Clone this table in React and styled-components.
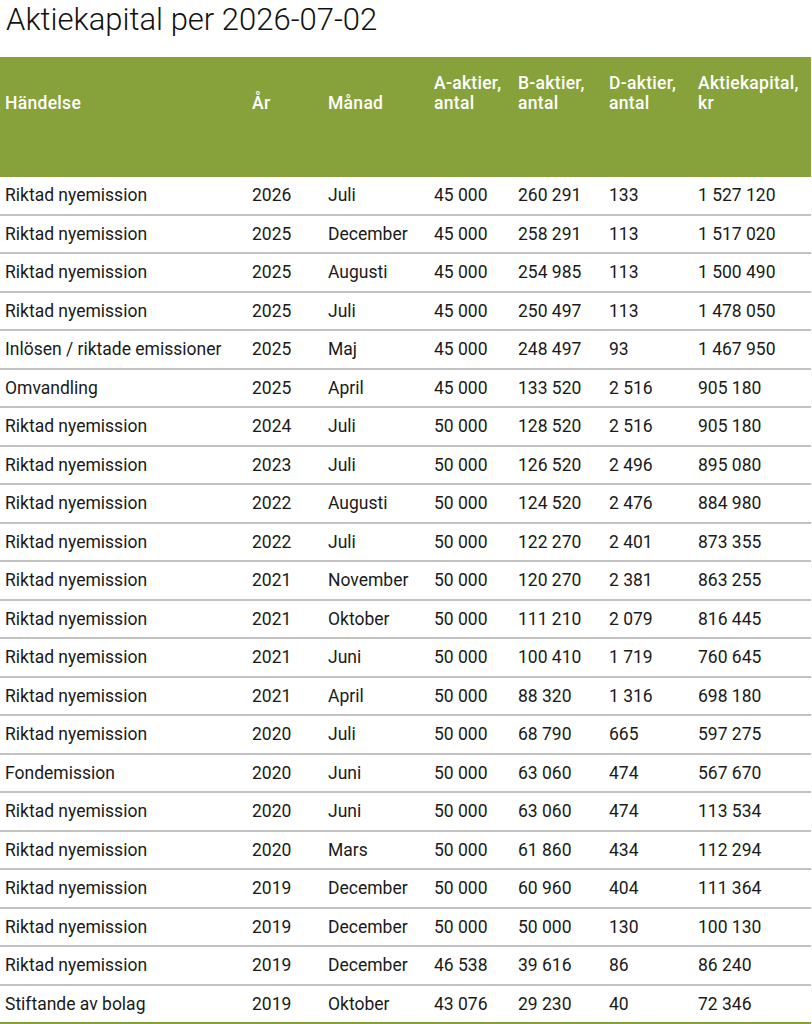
import React from "react";
import styled, { createGlobalStyle } from "styled-components";

const GlobalStyle = createGlobalStyle`
    body {
        margin: 0;
        background: #ffffff;
        font-family: Roboto, "Liberation Sans", sans-serif;
        color: #1a1a1a;
    }
`;

const Page = styled.div`
    width: 811px;
`;

const Title = styled.h1`
    margin: 0;
    padding: 0 0 0 6px;
    height: 57px;
    font-size: 31px;
    font-weight: 300;
    line-height: 40px;
    color: #111;
`;

const Table = styled.table`
    width: 811px;
    border-collapse: separate;
    border-spacing: 0;
    table-layout: fixed;
    font-size: 17.5px;
    border-bottom: 2px solid #86a13a;
`;

const Th = styled.th`
    background-color: #87a23a;
    color: #ffffff;
    font-weight: 500;
    font-size: 17.5px;
    letter-spacing: 0.3px;
    text-align: start;
    vertical-align: bottom;
    line-height: 20px;
    padding: 16px 5px 64px;
    width: ${(props) => props.width}px;
    white-space: nowrap;
`;

const Td = styled.td`
    height: 36.5px;
    padding: 0 5px;
    line-height: 20px;
    vertical-align: middle;
    white-space: nowrap;
    border-bottom: ${(props) => (props.last ? "none" : "2px solid #c2c2c2")};
`;

const columns = [
    { label: "Händelse", width: 237 },
    { label: "År", width: 66 },
    { label: "Månad", width: 96 },
    { label: ["A-aktier,", "antal"], width: 74 },
    { label: ["B-aktier,", "antal"], width: 81 },
    { label: ["D-aktier,", "antal"], width: 79 },
    { label: ["Aktiekapital,", "kr"], width: 108 },
];

const rows = [
    ["Riktad nyemission", "2026", "Juli", "45 000", "260 291", "133", "1 527 120"],
    ["Riktad nyemission", "2025", "December", "45 000", "258 291", "113", "1 517 020"],
    ["Riktad nyemission", "2025", "Augusti", "45 000", "254 985", "113", "1 500 490"],
    ["Riktad nyemission", "2025", "Juli", "45 000", "250 497", "113", "1 478 050"],
    ["Inlösen / riktade emissioner", "2025", "Maj", "45 000", "248 497", "93", "1 467 950"],
    ["Omvandling", "2025", "April", "45 000", "133 520", "2 516", "905 180"],
    ["Riktad nyemission", "2024", "Juli", "50 000", "128 520", "2 516", "905 180"],
    ["Riktad nyemission", "2023", "Juli", "50 000", "126 520", "2 496", "895 080"],
    ["Riktad nyemission", "2022", "Augusti", "50 000", "124 520", "2 476", "884 980"],
    ["Riktad nyemission", "2022", "Juli", "50 000", "122 270", "2 401", "873 355"],
    ["Riktad nyemission", "2021", "November", "50 000", "120 270", "2 381", "863 255"],
    ["Riktad nyemission", "2021", "Oktober", "50 000", "111 210", "2 079", "816 445"],
    ["Riktad nyemission", "2021", "Juni", "50 000", "100 410", "1 719", "760 645"],
    ["Riktad nyemission", "2021", "April", "50 000", "88 320", "1 316", "698 180"],
    ["Riktad nyemission", "2020", "Juli", "50 000", "68 790", "665", "597 275"],
    ["Fondemission", "2020", "Juni", "50 000", "63 060", "474", "567 670"],
    ["Riktad nyemission", "2020", "Juni", "50 000", "63 060", "474", "113 534"],
    ["Riktad nyemission", "2020", "Mars", "50 000", "61 860", "434", "112 294"],
    ["Riktad nyemission", "2019", "December", "50 000", "60 960", "404", "111 364"],
    ["Riktad nyemission", "2019", "December", "50 000", "50 000", "130", "100 130"],
    ["Riktad nyemission", "2019", "December", "46 538", "39 616", "86", "86 240"],
    ["Stiftande av bolag", "2019", "Oktober", "43 076", "29 230", "40", "72 346"],
];

const App = () => {
    return (
        <Page>
            <GlobalStyle />
            <Title>Aktiekapital per 2026-07-02</Title>
            <Table>
                <thead>
                    <tr>
                        {columns.map((col, i) => (
                            <Th key={i} width={col.width}>
                                {Array.isArray(col.label) ? (
                                    <>
                                        {col.label[0]}
                                        <br />
                                        {col.label[1]}
                                    </>
                                ) : (
                                    col.label
                                )}
                            </Th>
                        ))}
                    </tr>
                </thead>
                <tbody>
                    {rows.map((row, i) => (
                        <tr key={i}>
                            {row.map((cell, j) => (
                                <Td key={j} last={i === rows.length - 1}>
                                    {cell}
                                </Td>
                            ))}
                        </tr>
                    ))}
                </tbody>
            </Table>
        </Page>
    );
};

export default App;
